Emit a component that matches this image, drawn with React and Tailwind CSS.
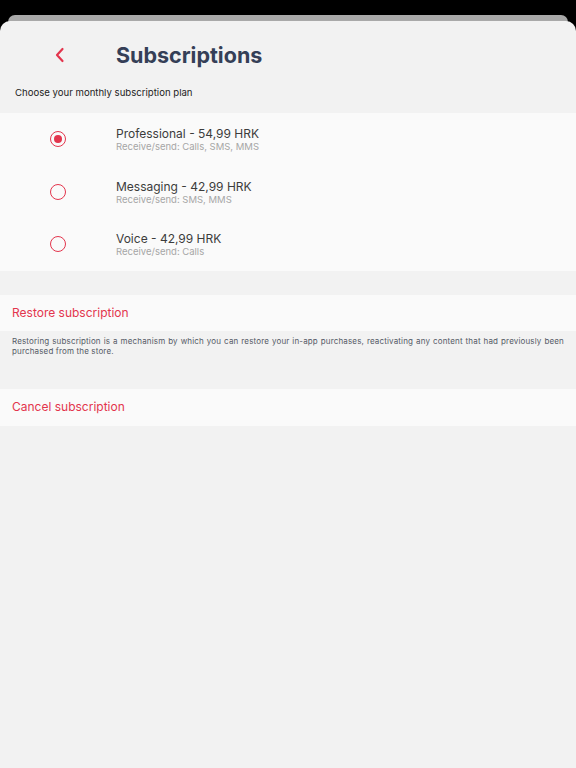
const plans = [
  { name: "Professional - 54,99 HRK", desc: "Receive/send: Calls, SMS, MMS", checked: true },
  { name: "Messaging - 42,99 HRK", desc: "Receive/send: SMS, MMS" },
  { name: "Voice - 42,99 HRK", desc: "Receive/send: Calls" },
];

function Radio({ checked }) {
  return (
    <div className="w-[16px] h-[16px] rounded-full border-[1.5px] border-[#e3354d] flex items-center justify-center">
      {checked && <div className="w-[8px] h-[8px] rounded-full bg-[#e3354d]" />}
    </div>
  );
}

export default function App() {
  return (
    <div className="w-[576px] h-[768px] bg-black flex flex-col overflow-hidden font-['Inter',sans-serif]">
      <div className="h-[15px] shrink-0" />
      <div className="mx-[8px] h-[7px] shrink-0 rounded-t-[8px] bg-[#a9a9a9]" />
      <div className="flex-1 -mt-px bg-[#f2f2f2] rounded-t-[10px] flex flex-col">
        <div className="h-[65px] flex items-center pt-[3px]">
          <div className="w-[116px] flex justify-center pl-[3px]">
            <svg width="12" height="16" viewBox="0 0 12 16" fill="none">
              <path d="M8.5 2 L3 8 L8.5 14" stroke="#e3354d" strokeWidth="2.2" strokeLinecap="round" strokeLinejoin="round" />
            </svg>
          </div>
          <h1 className="text-[21.5px] font-bold text-[#353f57]">Subscriptions</h1>
        </div>
        <p className="px-[15px] text-[9.6px] text-[#222] h-[27px] leading-[14px]">
          Choose your monthly subscription plan
        </p>
        <div className="bg-[#fafafa]">
          {plans.map((p) => (
            <div key={p.name} className="h-[52.5px] flex items-center">
              <div className="w-[116px] flex justify-center">
                <Radio checked={p.checked} />
              </div>
              <div className="flex flex-col">
                <span className="text-[12px] leading-[15px] text-[#3c3c3c]">{p.name}</span>
                <span className="text-[9.5px] leading-[11px] text-[#a6a6a6]">{p.desc}</span>
              </div>
            </div>
          ))}
        </div>
        <div className="h-[24px]" />
        <div className="h-[36px] bg-[#fafafa] flex items-center px-[12px]">
          <span className="text-[12px] text-[#e3354d]">Restore subscription</span>
        </div>
        <div className="h-[58px] px-[12px] pt-[5px] text-[8px] leading-[10.5px] text-[#555a66] text-justify tracking-[0.15px]">
          Restoring subscription is a mechanism by which you can restore your in-app purchases, reactivating any content that had previously been purchased from the store.
        </div>
        <div className="h-[37px] bg-[#fafafa] flex items-center px-[12px]">
          <span className="text-[12px] text-[#e3354d]">Cancel subscription</span>
        </div>
      </div>
    </div>
  );
}
